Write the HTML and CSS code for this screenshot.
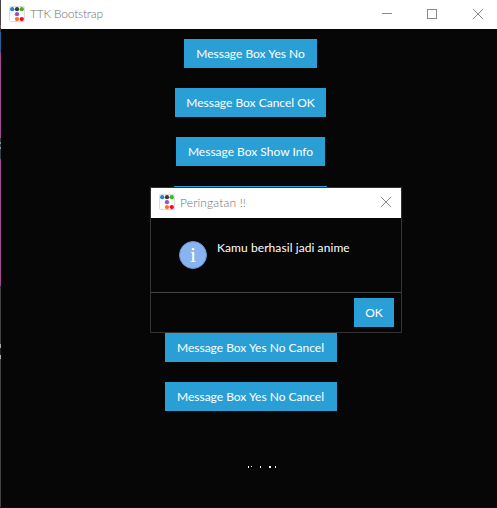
FILE: index.html
```html
<!DOCTYPE html>
<html lang="id">
<head>
<meta charset="utf-8">
<title>TTK Bootstrap</title>
<link rel="stylesheet" href="styles.css">
</head>
<body>
<svg class="defs" aria-hidden="true">
  <symbol id="logo" viewBox="0 0 16 16">
    <rect x=".5" y=".5" width="15" height="15" rx="1" fill="#fff" stroke="#ddd"/>
    <circle cx="3.2" cy="3.2" r="2.15" fill="#2780e3"/>
    <circle cx="8" cy="3.2" r="2.15" fill="#373a3c"/>
    <circle cx="12.8" cy="3.2" r="2.15" fill="#3fb618"/>
    <circle cx="8" cy="8.2" r="2.15" fill="#9954bb"/>
    <circle cx="8" cy="13.1" r="2.15" fill="#ff7518"/>
    <circle cx="12.8" cy="13.1" r="2.15" fill="#ff0039"/>
  </symbol>
  <symbol id="close" viewBox="0 0 10 10">
    <path d="M0 0 10 10M10 0 0 10" stroke="#8b8b8b" fill="none"/>
  </symbol>
</svg>
<div class="desktop">
  <main class="window">
    <header class="titlebar">
      <svg class="logo"><use href="#logo"/></svg>
      <span class="title main-title">TTK Bootstrap</span>
      <div class="controls">
        <svg width="10" height="10"><path d="M0 4.5h10" stroke="#8b8b8b"/></svg>
        <svg width="11" height="10"><rect x=".5" y=".5" width="9" height="9" stroke="#8b8b8b" fill="none"/></svg>
        <svg width="10" height="10"><use href="#close"/></svg>
      </div>
    </header>
    <section class="buttons">
      <button class="btn w-yesno">Message Box Yes No</button>
      <button class="btn w-cancel">Message Box Cancel OK</button>
      <button class="btn w-info">Message Box Show Info</button>
      <button class="btn w-hidden"></button>
      <button class="btn w-hidden"></button>
      <button class="btn w-hidden"></button>
      <button class="btn w-long">Message Box Yes No Cancel</button>
      <button class="btn w-long">Message Box Yes No Cancel</button>
    </section>
    <svg class="fragment" width="28" height="2"><path fill="#fff" d="M0 0h1v2H0zM3 0h1v1H3zM12 0h1v2h-1zM21 0h2v2h-2zM27 0h1v2h-1z"/></svg>
  </main>
  <div class="dialog" role="dialog">
    <header class="dialog-title">
      <svg class="logo"><use href="#logo"/></svg>
      <span class="title warn-title">Peringatan !!</span>
      <svg class="dialog-close" width="10" height="10"><use href="#close"/></svg>
    </header>
    <div class="dialog-body">
      <div class="info">i</div>
      <p class="message">Kamu berhasil jadi anime</p>
    </div>
    <footer class="dialog-footer"><button class="btn ok">OK</button></footer>
  </div>
</div>
</body>
</html>
```
FILE: styles.css
```css
* { box-sizing: border-box; }
body { margin: 0; overflow: hidden; background: #060606; font: 12px/15px Lato, "Open Sans", sans-serif; }
.defs { position: absolute; width: 0; height: 0; }
svg { display: block; flex: none; }
.desktop {
  position: relative; width: 497px; height: 508px; padding-left: 1px; overflow: hidden;
  background: linear-gradient(#4b4449 0 25px, #775363 25px 28px, #34363e 28px 32px, #22629a 32px 52px, #a0488f 52px 138px, #34404d 138px 142px, #8b929a 142px 144px, #343d48 144px 147px, #89939a 147px 149px, #34404d 149px 159px, #a0488f 159px 286px, #303449 286px 288px, #444 288px 344px, #aaa 344px 348px, #222 348px 355px, #aaa 355px 359px, #444 359px 507px, #160810 507px);
}
.window { width: 499px; height: 507px; background: #060606; }
.titlebar { display: flex; align-items: center; width: 496px; height: 29px; padding: 0 14px 2px 8px; background: #fff; }
.logo { width: 16px; height: 16px; }
.title { color: #707070; font-weight: 300; white-space: nowrap; }
.main-title { margin-left: 5px; letter-spacing: -.2px; }
.controls { display: flex; align-items: center; margin-left: auto; gap: 35px; }
.buttons { display: flex; flex-direction: column; align-items: center; gap: 20px; padding-top: 10px; }
.btn { display: block; height: 29px; padding: 0; border: 0; border-radius: 0; background: #2a9fd6; color: #fff; font: inherit; white-space: nowrap; }
.w-yesno { width: 133px; }
.w-cancel { width: 151px; }
.w-info { width: 149px; }
.w-hidden { width: 153px; }
.w-long { width: 172px; }
.fragment { margin: 55px 0 0 247px; }
.dialog { position: absolute; left: 150px; top: 187px; width: 252px; height: 146px; border: 1px solid #333; background: #060606; }
.dialog-title { display: flex; align-items: center; height: 30px; padding: 0 10px 2px 8px; background: #fff; }
.warn-title { margin-left: 5px; letter-spacing: .15px; }
.dialog-close { margin-left: auto; }
.dialog-body { display: flex; height: 74px; padding: 23px 0 0 28px; }
.info { width: 28px; height: 28px; border: 1px solid #6692cf; border-radius: 50%; background: #8ab4ef; color: #fff; font: 22px/26px "Liberation Serif", serif; text-align: center; }
.message { margin: -1px 0 0 10px; color: #fff; letter-spacing: .08px; }
.dialog-footer { display: flex; justify-content: flex-end; height: 40px; padding: 5px 7px 0; border-top: 1px solid #444; }
.ok { width: 40px; }
```
